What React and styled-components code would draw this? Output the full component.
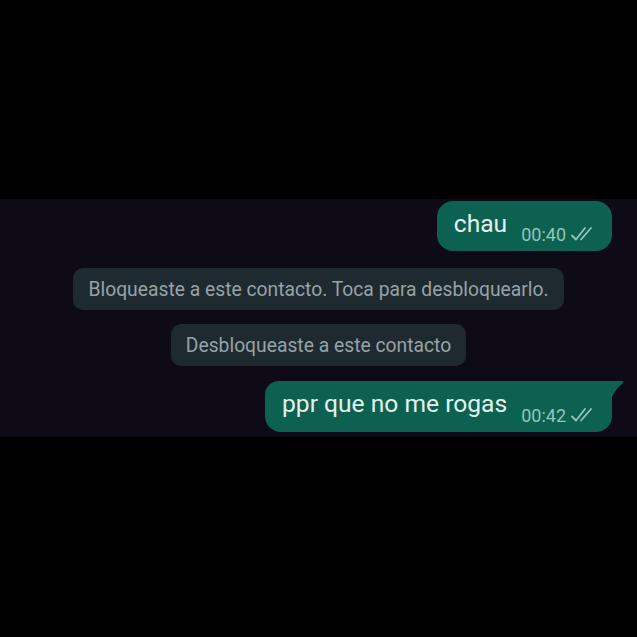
import styled, { createGlobalStyle } from 'styled-components';

const GlobalStyle = createGlobalStyle`
  html, body {
    margin: 0;
    background: #000;
    height: 100%;
  }
  body {
    font-family: Roboto, "Noto Sans", sans-serif;
  }
`

const Page = styled.div`
  width: 637px;
  height: 637px;
  background: #000;
  padding-top: 199px;
  box-sizing: border-box;
`

const Chat = styled.div`
  height: 238px;
  box-sizing: border-box;
  background: #0e0b17;
  padding: 2px 25px 0 25px;
  display: flex;
  flex-direction: column;
`

const Outgoing = styled.div`
  position: relative;
  align-self: flex-end;
  display: flex;
  align-items: flex-end;
  background: #0c6150;
  border-radius: ${props => (props.tail ? '14px 0 16px 16px' : '16px')};
  padding: 9px 15px 5px 17px;
  margin-top: ${props => props.top}px;
  height: ${props => props.h}px;
  box-sizing: border-box;
`

const Tail = styled.svg`
  position: absolute;
  top: 0;
  right: -12px;
`

const Text = styled.span`
  color: #e3f2ec;
  font-size: 24.6px;
  line-height: 28px;
  align-self: flex-start;
  margin-right: 14px;
`

const Time = styled.span`
  color: #93c6b8;
  font-size: 18px;
  line-height: 20px;
  margin-bottom: 1px;
`

const Ticks = styled.svg`
  margin: 0 0 4px 5px;
`

const Notice = styled.div`
  align-self: center;
  background: #1e2a30;
  color: #97a2a7;
  font-size: 19.3px;
  line-height: 44px;
  height: 42px;
  padding: 0 15px;
  border-radius: 10px;
  margin-top: ${props => props.top}px;
`

function DoubleCheck() {
  return (
    <Ticks width="26" height="16" viewBox="0 0 26 16" fill="none" stroke="#93c6b8" strokeWidth="1.8" strokeLinecap="round" strokeLinejoin="round">
      <path d="M1 9.5 L5 13.5 L14 2" />
      <path d="M10 13.5 L20 2" />
    </Ticks>
  )
}

export default function App() {
  return (
    <Page>
      <GlobalStyle />
      <Chat>
        <Outgoing h={50} top={0}>
          <Text>chau</Text>
          <Time>00:40</Time>
          <DoubleCheck />
        </Outgoing>
        <Notice top={17}>Bloqueaste a este contacto. Toca para desbloquearlo.</Notice>
        <Notice top={14}>Desbloqueaste a este contacto</Notice>
        <Outgoing tail h={51} top={15}>
          <Tail width="13" height="18" viewBox="0 0 13 18">
            <path d="M0 0 L11 0 Q13 0 12 2 Q4 8 0 18 Z" fill="#0c6150" />
          </Tail>
          <Text>ppr que no me rogas</Text>
          <Time>00:42</Time>
          <DoubleCheck />
        </Outgoing>
      </Chat>
    </Page>
  )
}
